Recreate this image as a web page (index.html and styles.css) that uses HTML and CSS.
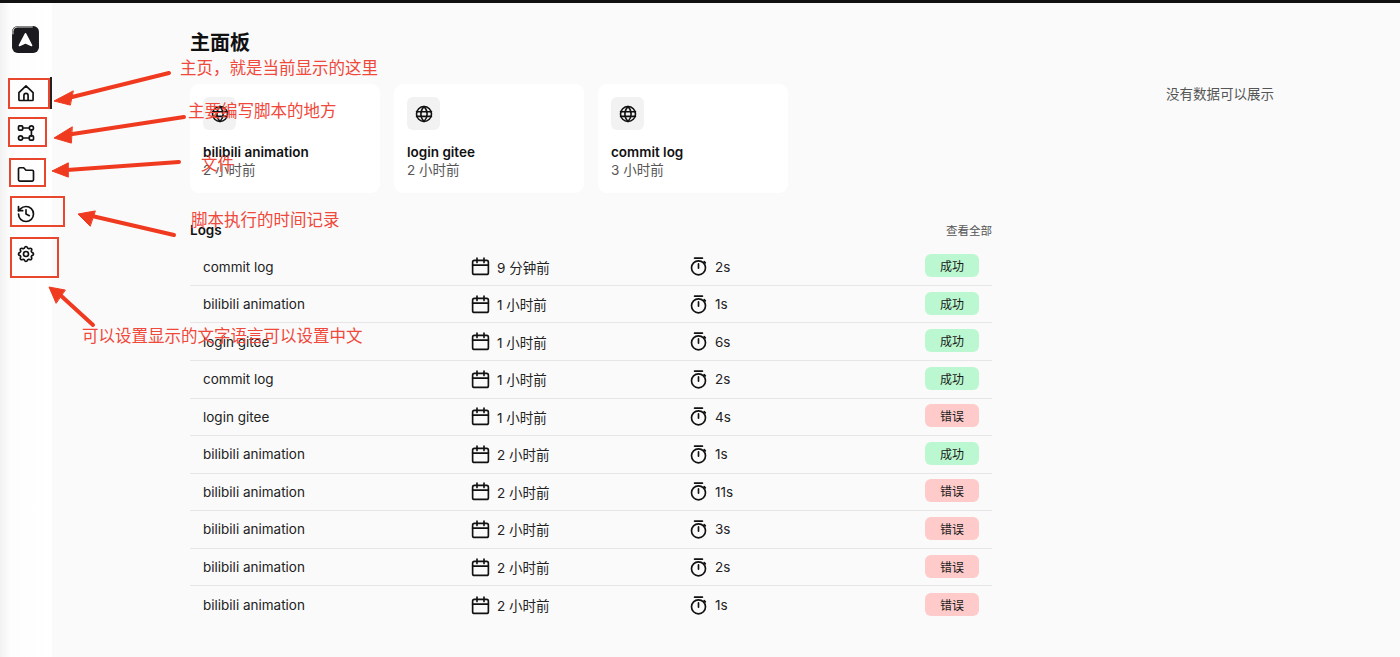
FILE: index.html
```html
<!DOCTYPE html>
<html lang="zh">
<head>
<meta charset="utf-8">
<title>主面板</title>
<link rel="stylesheet" href="styles.css">
</head>
<body>
<svg width="0" height="0" class="defs">
  <defs>
    <symbol id="globe" viewBox="0 0 24 24"><circle cx="12" cy="12" r="9"/><path d="M3 9.200h18M3 14.800h18M12 3c-5 5.400-5 12.600 0 18M12 3c5 5.400 5 12.600 0 18"/></symbol>
    <symbol id="cal" viewBox="0 0 24 24"><rect x="3" y="5" width="18" height="16" rx="2"/><path d="M3 10.500h18M8 2.500v5M16 2.500v5"/></symbol>
    <symbol id="timer" viewBox="0 0 24 24"><circle cx="12" cy="13.500" r="8"/><path d="M7.500 2.500h9M12 9v5M18.500 6.500l1.300 1.300"/></symbol>
  </defs>
</svg>
<div class="topbar"></div>
<div class="app">
  <nav class="sidebar">
    <div class="logo"><svg viewBox="0 0 28 28" width="29" height="29"><rect x="1" y="1" width="26" height="26" rx="5.500" fill="#1b1b1f"/><path d="M1.900 9V6.500a4.600 4.600 0 0 1 4.600-4.600H21" fill="none" stroke="#f4f4f4" stroke-width=".9"/><path d="M14 8.500l5.800 11.200-5.800-2.600-5.800 2.600z" fill="#fff" stroke="#fff" stroke-width="1.600" stroke-linejoin="round"/></svg></div>
    <ul class="nav">
      <li class="nav-item active"><svg class="ico" viewBox="0 0 24 24"><path d="M3.500 11.500 12 3.500l8.500 8V20a1 1 0 0 1-1 1h-15a1 1 0 0 1-1-1zM9.500 21v-6a2.500 2.500 0 0 1 5 0v6"/></svg></li>
      <li class="nav-item"><svg class="ico" viewBox="0 0 24 24"><rect x="3" y="3.500" width="5" height="5" rx="1"/><circle cx="18.500" cy="6" r="2.500"/><circle cx="5.500" cy="18" r="2.500"/><rect x="16" y="15.500" width="5" height="5" rx="1"/><path d="M8 6h8M8 18h8M18.500 8.500v7"/></svg></li>
      <li class="nav-item"><svg class="ico" viewBox="0 0 24 24"><path d="M3 6a1.500 1.500 0 0 1 1.500-1.500h4.700l2.800 3h7.500A1.500 1.500 0 0 1 21 9v10a1.500 1.500 0 0 1-1.500 1.500h-15A1.500 1.500 0 0 1 3 19z"/></svg></li>
      <li class="nav-item"><svg class="ico" viewBox="0 0 24 24"><path d="M3 12a9 9 0 1 0 9-9 9.750 9.750 0 0 0-6.740 2.740L3 8"/><path d="M3 3v5h5M12 7v5l4 2"/></svg></li>
      <li class="nav-item"><svg class="ico" viewBox="0 0 24 24"><path d="M10.325 4.317c.426-1.756 2.924-1.756 3.350 0a1.724 1.724 0 0 0 2.573 1.066c1.543-.94 3.310.826 2.370 2.370a1.724 1.724 0 0 0 1.065 2.572c1.756.426 1.756 2.924 0 3.350a1.724 1.724 0 0 0-1.066 2.573c.94 1.543-.826 3.310-2.370 2.370a1.724 1.724 0 0 0-2.572 1.065c-.426 1.756-2.924 1.756-3.350 0a1.724 1.724 0 0 0-2.573-1.066c-1.543.94-3.310-.826-2.370-2.370a1.724 1.724 0 0 0-1.065-2.572c-1.756-.426-1.756-2.924 0-3.350a1.724 1.724 0 0 0 1.066-2.573c-.94-1.543.826-3.310 2.370-2.370 1 .608 2.296.07 2.572-1.065z"/><circle cx="12" cy="12" r="3"/></svg></li>
    </ul>
  </nav>
  <main class="main">
    <div class="content">
      <h1 class="title">主面板</h1>
      <section class="cards">
        <article class="card"><div class="card-icon"><svg class="ico"><use href="#globe"/></svg></div><div class="card-name">bilibili animation</div><div class="card-time">2 小时前</div></article>
        <article class="card"><div class="card-icon"><svg class="ico"><use href="#globe"/></svg></div><div class="card-name">login gitee</div><div class="card-time">2 小时前</div></article>
        <article class="card"><div class="card-icon"><svg class="ico"><use href="#globe"/></svg></div><div class="card-name">commit log</div><div class="card-time">3 小时前</div></article>
      </section>
      <section class="logs">
        <header class="logs-head"><h2>Logs</h2><a class="view-all">查看全部</a></header>
        <div class="row"><span>commit log</span><span class="cell"><svg class="ico"><use href="#cal"/></svg>9 分钟前</span><span class="cell"><svg class="ico"><use href="#timer"/></svg>2s</span><span class="badge ok">成功</span></div>
        <div class="row"><span>bilibili animation</span><span class="cell"><svg class="ico"><use href="#cal"/></svg>1 小时前</span><span class="cell"><svg class="ico"><use href="#timer"/></svg>1s</span><span class="badge ok">成功</span></div>
        <div class="row"><span>login gitee</span><span class="cell"><svg class="ico"><use href="#cal"/></svg>1 小时前</span><span class="cell"><svg class="ico"><use href="#timer"/></svg>6s</span><span class="badge ok">成功</span></div>
        <div class="row"><span>commit log</span><span class="cell"><svg class="ico"><use href="#cal"/></svg>1 小时前</span><span class="cell"><svg class="ico"><use href="#timer"/></svg>2s</span><span class="badge ok">成功</span></div>
        <div class="row"><span>login gitee</span><span class="cell"><svg class="ico"><use href="#cal"/></svg>1 小时前</span><span class="cell"><svg class="ico"><use href="#timer"/></svg>4s</span><span class="badge err">错误</span></div>
        <div class="row"><span>bilibili animation</span><span class="cell"><svg class="ico"><use href="#cal"/></svg>2 小时前</span><span class="cell"><svg class="ico"><use href="#timer"/></svg>1s</span><span class="badge ok">成功</span></div>
        <div class="row"><span>bilibili animation</span><span class="cell"><svg class="ico"><use href="#cal"/></svg>2 小时前</span><span class="cell"><svg class="ico"><use href="#timer"/></svg>11s</span><span class="badge err">错误</span></div>
        <div class="row"><span>bilibili animation</span><span class="cell"><svg class="ico"><use href="#cal"/></svg>2 小时前</span><span class="cell"><svg class="ico"><use href="#timer"/></svg>3s</span><span class="badge err">错误</span></div>
        <div class="row"><span>bilibili animation</span><span class="cell"><svg class="ico"><use href="#cal"/></svg>2 小时前</span><span class="cell"><svg class="ico"><use href="#timer"/></svg>2s</span><span class="badge err">错误</span></div>
        <div class="row last"><span>bilibili animation</span><span class="cell"><svg class="ico"><use href="#cal"/></svg>2 小时前</span><span class="cell"><svg class="ico"><use href="#timer"/></svg>1s</span><span class="badge err">错误</span></div>
      </section>
    </div>
    <aside class="empty">没有数据可以展示</aside>
  </main>
</div>

<div class="box box-1"></div>
<div class="box box-2"></div>
<div class="box box-3"></div>
<div class="box box-4"></div>
<div class="box box-5"></div>
<svg class="arrows" viewBox="0 0 1400 657" width="1400" height="657">
  <path d="M169 73 64 99"/><path d="M73 91 54 101 70 105z" class="head"/>
  <path d="M184 117 66 135"/><path d="M72 127 54 138 71 143z" class="head"/>
  <path d="M179 162 67 170"/><path d="M68 163 52 171 68 177z" class="head"/>
  <path d="M174 235 92 216"/><path d="M95 211 78 214 90 226z" class="head"/>
  <path d="M93 325 58 293"/><path d="M65 290 49 287 56 303z" class="head"/>
</svg>
<span class="note note-1">主页，就是当前显示的这里</span>
<span class="note note-2">主要编写脚本的地方</span>
<span class="note note-3">文件</span>
<span class="note note-4">脚本执行的时间记录</span>
<span class="note note-5">可以设置显示的文字语言可以设置中文</span>
</body>
</html>
```
FILE: styles.css
```css
* { box-sizing: border-box; }
html, body { margin: 0; height: 657px; overflow: hidden; }
body {
  position: relative;
  background: #fafafa;
  color: #1a1a1a;
  font-family: Inter, "Noto Sans CJK SC", sans-serif;
  font-size: 13.5px;
}
.defs { position: absolute; }
.ico {
  width: 20px;
  height: 20px;
  fill: none;
  stroke: #111;
  stroke-width: 2;
  stroke-linecap: round;
  stroke-linejoin: round;
  flex: none;
}
.topbar { height: 3px; background: #111; }
.app { display: flex; height: 654px; }
.sidebar {
  width: 52px;
  flex: none;
  background: linear-gradient(90deg, #f1f1f1 0, #fdfdfd 10px, #fff 100%);
  padding: 22px 0 0 11px;
}
.logo { height: 29px; line-height: 0; }
.nav { list-style: none; margin: 19px 0 0; padding: 0; }
.nav-item {
  position: relative;
  height: 40.250px;
  display: flex;
  align-items: center;
  padding-left: 5px;
}
.nav-item.active::after {
  content: "";
  position: absolute;
  right: 0;
  top: 4px;
  width: 2px;
  height: 32px;
  background: #222;
}
.main { flex: 1; display: flex; padding-left: 138px; }
.content { width: 802px; flex: none; }
.title { margin: 28px 0 0; font-size: 20px; line-height: 24px; font-weight: 700; color: #111; }
.cards { display: flex; gap: 14px; margin-top: 29px; }
.card {
  width: 190px;
  height: 109px;
  background: #fff;
  border-radius: 9px;
  padding: 13px;
}
.card-icon {
  width: 33px;
  height: 33px;
  border-radius: 6px;
  background: #f2f2f2;
  display: flex;
  align-items: center;
  justify-content: center;
}
.card-icon .ico { width: 20px; height: 20px; stroke-width: 1.900; }
.card-name { margin-top: 13px; line-height: 18px; font-weight: 600; color: #111; }
.card-time { line-height: 18px; color: #555; }
.logs { margin-top: 28px; }
.logs-head { display: flex; justify-content: space-between; align-items: center; height: 18px; }
.logs-head h2 { margin: 0; font-size: 13.5px; font-weight: 600; color: #111; }
.view-all { font-size: 11.500px; color: #555; }
.row {
  height: 37.550px;
  padding: 0 13px;
  display: grid;
  grid-template-columns: 267px 218px 1fr 54px;
  align-items: center;
  border-bottom: 1px solid #e6e6e6;
  color: #222;
}
.logs-head + .row { margin-top: 9.400px; }
.row.last { border-bottom: 0; }
.cell { display: flex; align-items: center; gap: 6px; }
.cell .ico { width: 21px; height: 21px; stroke-width: 1.900; }
.badge {
  height: 23px;
  margin-bottom: 2px;
  border-radius: 6px;
  display: flex;
  align-items: center;
  justify-content: center;
  font-size: 12px;
  color: #1a1a1a;
}
.ok { background: #bbf7d0; }
.err { background: #fecaca; }
.empty { margin: 82px 0 0 174px; line-height: 18px; color: #555; white-space: nowrap; }

.box { position: absolute; border: 2px solid #e8472e; }
.box-1 { left: 8px; top: 78px; width: 42px; height: 31px; }
.box-2 { left: 8px; top: 117px; width: 39px; height: 30px; }
.box-3 { left: 9px; top: 158px; width: 37px; height: 29px; }
.box-4 { left: 10px; top: 196px; width: 55px; height: 31px; }
.box-5 { left: 10px; top: 237px; width: 49px; height: 41px; }
.arrows { position: absolute; left: 0; top: 0; pointer-events: none; }
.arrows path { fill: none; stroke: #f03a1f; stroke-width: 4; stroke-linecap: round; }
.arrows path.head { fill: #f03a1f; stroke-width: 1; }
.note { position: absolute; font-size: 16.500px; line-height: 20px; color: #f0483a; white-space: nowrap; }
.note-1 { left: 180px; top: 58px; }
.note-2 { left: 188px; top: 101px; }
.note-3 { left: 201px; top: 154px; }
.note-4 { left: 191px; top: 210px; }
.note-5 { left: 82px; top: 326px; }
```
